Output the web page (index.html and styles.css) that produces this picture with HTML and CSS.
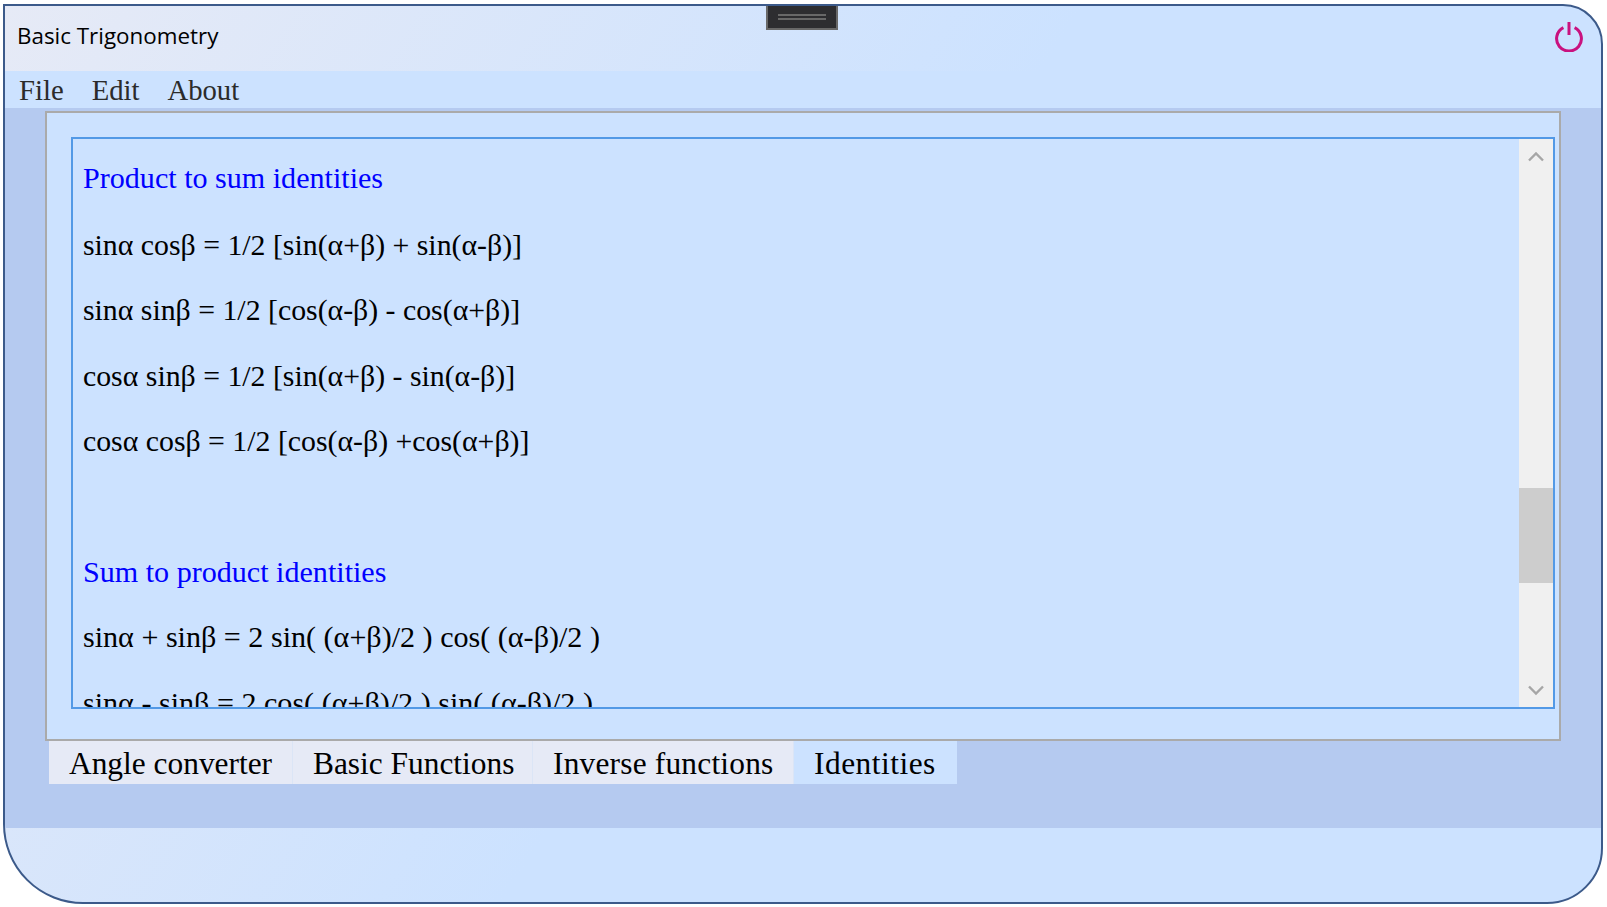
FILE: index.html
```html
<!DOCTYPE html>
<html lang="en">
<head>
<meta charset="utf-8">
<title>Basic Trigonometry</title>
<link rel="stylesheet" href="styles.css">
</head>
<body>
<div class="window">
  <header class="titlebar">
    <span class="title">Basic Trigonometry</span>
    <div class="grip"><i></i><i></i></div>
    <svg class="power" width="34" height="34" viewBox="0 0 34 34" fill="none" stroke="#c9127f" stroke-width="3">
      <path d="M11.4 9.6 A12.4 12.4 0 1 0 22.6 9.6"/>
      <path d="M17 4v13"/>
    </svg>
  </header>
  <nav class="menubar"><span>File</span><span>Edit</span><span>About</span></nav>
  <main class="main">
    <section class="group">
      <div class="textbox">
        <div class="doc">
          <p class="head">Product to sum identities</p>
          <p>sinα cosβ = 1/2 [sin(α+β) + sin(α-β)]</p>
          <p>sinα sinβ = 1/2 [cos(α-β) - cos(α+β)]</p>
          <p>cosα sinβ = 1/2 [sin(α+β) - sin(α-β)]</p>
          <p>cosα cosβ = 1/2 [cos(α-β) +cos(α+β)]</p>
          <p>&nbsp;</p>
          <p class="head">Sum to product identities</p>
          <p class="wide">sinα + sinβ = 2 sin( (α+β)/2 ) cos( (α-β)/2 )</p>
          <p class="wide">sinα - sinβ = 2 cos( (α+β)/2 ) sin( (α-β)/2 )</p>
        </div>
        <div class="scrollbar">
          <svg class="arrow" width="34" height="34" viewBox="0 0 34 34" fill="none" stroke="#a6a6a6" stroke-width="2.4"><path d="M10 21.5l7-7 7 7"/></svg>
          <div class="track"><div class="thumb"></div></div>
          <svg class="arrow" width="34" height="34" viewBox="0 0 34 34" fill="none" stroke="#a6a6a6" stroke-width="2.4"><path d="M10 13.5l7 7 7-7"/></svg>
        </div>
      </div>
    </section>
    <div class="tabs">
      <span class="tab tab-angle">Angle converter</span>
      <span class="tab tab-basic">Basic Functions</span>
      <span class="tab tab-inverse">Inverse functions</span>
      <span class="tab tab-identities">Identities</span>
    </div>
  </main>
  <footer class="footer"></footer>
</div>
</body>
</html>
```
FILE: styles.css
```css
html, body { margin: 0; padding: 0; background: #fff; }
body { width: 1607px; height: 907px; overflow: hidden; }
.window {
  box-sizing: border-box;
  width: 1600px;
  height: 900px;
  margin: 4px 0 0 3px;
  border: 2px solid #3c5a8a;
  border-radius: 0 40px 56px 80px;
  overflow: hidden;
  background: linear-gradient(123deg, #e6eaf6 0, #cce2ff 905px);
  display: flex;
  flex-direction: column;
}
.titlebar {
  position: relative;
  height: 65px;
  flex: none;
  display: flex;
  align-items: center;
  justify-content: space-between;
  padding: 0 15px 0 12px;
}
.title { font: 22.4px "Open Sans", sans-serif; color: #000; margin-top: -6px; }
.grip {
  position: absolute;
  left: 761px;
  top: -2px;
  box-sizing: border-box;
  width: 72px;
  height: 26px;
  background: #2d2d30;
  border: 2px solid #686868;
  display: flex;
  flex-direction: column;
  align-items: center;
  gap: 2px;
  padding-top: 8px;
}
.grip i { display: block; width: 48px; height: 2px; background: #686868; }
.power { display: block; margin-top: -8px; }
.menubar {
  flex: none;
  box-sizing: border-box;
  height: 37px;
  background: #cce2ff;
  display: flex;
  align-items: center;
  gap: 28px;
  padding: 1px 0 0 14px;
  font: 28.7px "Liberation Serif", serif;
  color: #2b2b2b;
}
.main {
  flex: none;
  height: 720px;
  background: #b5caf0;
  padding: 3px 40px 0 40px;
  box-sizing: border-box;
}
.group {
  box-sizing: border-box;
  height: 630px;
  border: 2px solid #aaaaaa;
  background: #cce2ff;
  padding: 24px 4px 10px 24px;
}
.textbox {
  box-sizing: border-box;
  height: 572px;
  border: 2px solid #5299e6;
  display: flex;
  overflow: hidden;
}
.doc {
  flex: 1;
  padding: 7px 0 0 10px;
  font: 29.8px/65.6px "Liberation Serif", serif;
  color: #000;
  white-space: nowrap;
  overflow: hidden;
}
.doc p { margin: 0; height: 65.6px; }
.doc .head { color: #0000ff; font-size: 30.1px; }
.doc .wide { font-size: 30.1px; }
.scrollbar {
  flex: none;
  width: 34px;
  background: #f0f0f0;
  display: flex;
  flex-direction: column;
}
.arrow { display: block; flex: none; }
.track { flex: 1; padding-top: 315px; }
.thumb { height: 95px; background: #cdcdcd; }
.tabs { display: flex; padding-left: 4px; font: 31.4px "Liberation Serif", serif; color: #000; }
.tab {
  box-sizing: border-box;
  height: 43px;
  line-height: 45px;
  padding-left: 20px;
  background: #e6eaf6;
  border-right: 1px solid #dbe5f6;
}
.tab-angle { width: 244px; }
.tab-basic { width: 240px; }
.tab-inverse { width: 261px; letter-spacing: .2px; }
.tab-identities { width: 163px; letter-spacing: .5px; background: #cce2ff; border-right: 0; }
.footer { flex: 1; }
```
